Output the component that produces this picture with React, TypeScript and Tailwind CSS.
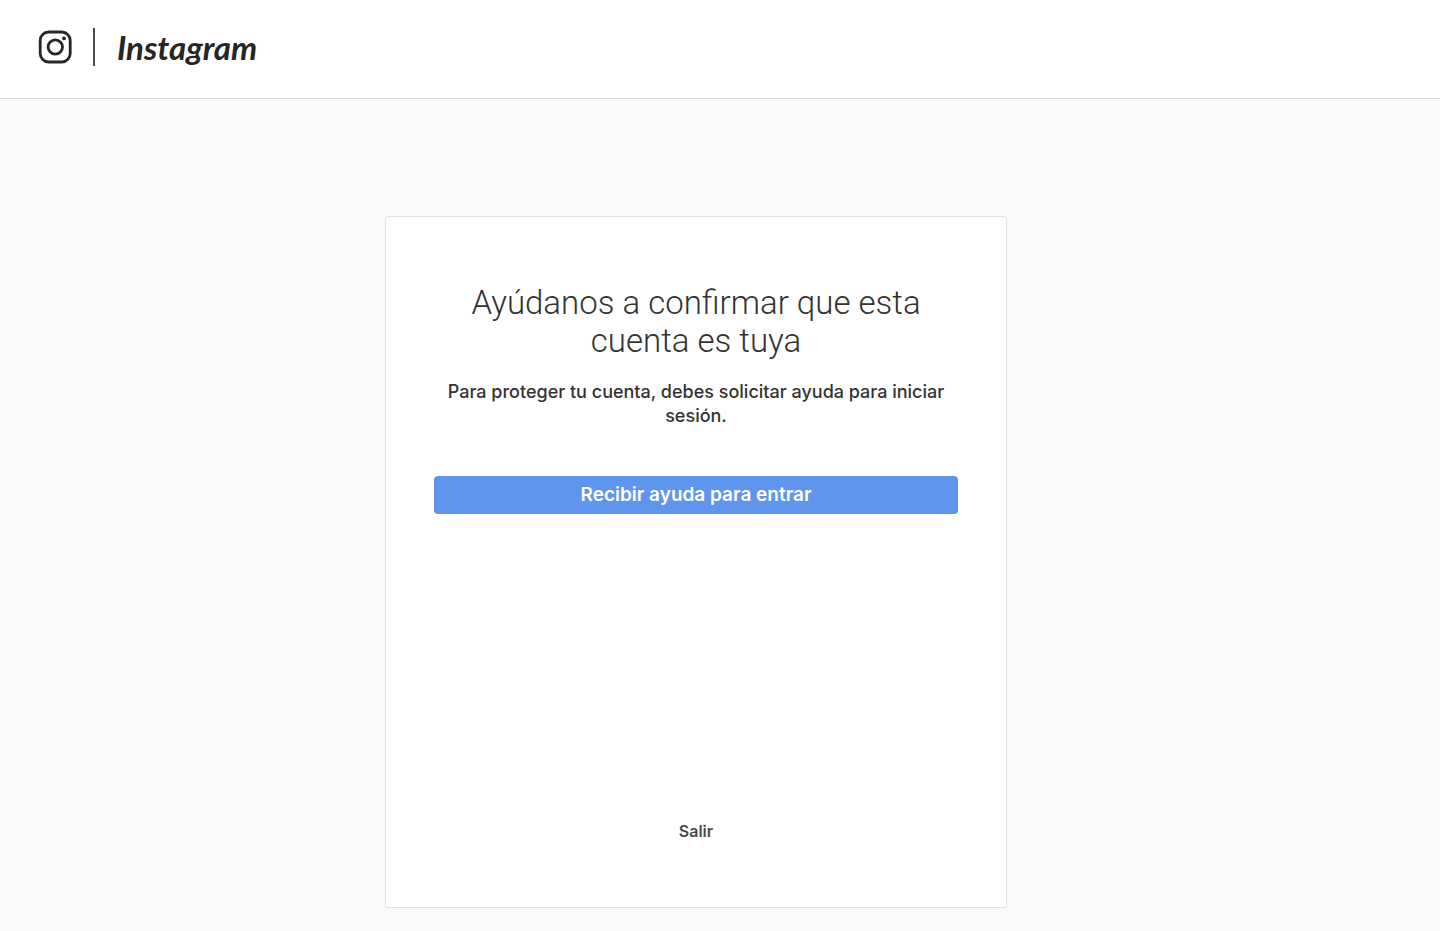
import React from 'react';

function CameraGlyph() {
  return <svg viewBox="0 0 34 34" className="w-[34px] h-[34px]" fill="none" aria-hidden="true">
      <rect x="2.2" y="2" width="30" height="30" rx="8.5" stroke="#262626" strokeWidth="2.8" />
      <circle cx="17.3" cy="17" r="7.2" stroke="#262626" strokeWidth="2.8" />
      <circle cx="26" cy="8.4" r="1.9" fill="#262626" />
    </svg>;
}

function Header() {
  return <header className="bg-white border-b border-[#dedede]">
      <a href="#" className="inline-flex items-center align-top h-[98px] pb-1 px-[38px] text-[#262626]">
        <CameraGlyph />
        <span className="w-[2px] h-[38px] ml-[21px] mr-[22px] bg-[#4a4a4a]" />
        <span className="font-['Lato',sans-serif] text-[33px] leading-[38px] font-bold italic">
          Instagram
        </span>
      </a>
    </header>;
}

function HelpCard() {
  return <main className="flex justify-center pt-[117px] pb-6 pr-12">
      <section className="flex flex-col w-full max-w-[622px] min-h-[692px] px-12 py-16 text-center bg-white border border-[#e2e2e2] rounded-[3px]">
        <h1 className="pt-[3px] px-6 font-['Roboto',sans-serif] text-[33px] leading-[38px] font-light text-[#333]">
          Ayúdanos a confirmar que esta cuenta es tuya
        </h1>
        <p className="mt-5 text-[18px] leading-[24px] font-medium text-[#333]">
          Para proteger tu cuenta, debes solicitar ayuda para iniciar sesión.
        </p>
        <button type="button" className="h-[38px] mt-12 text-[19px] leading-[24px] font-semibold text-white bg-[#5f95ed] rounded-[4px]">
          Recibir ayuda para entrar
        </button>
        <div className="mt-auto">
          <button type="button" className="text-[16px] leading-[24px] font-semibold text-[#4a4a4a]">
            Salir
          </button>
        </div>
      </section>
    </main>;
}

export default function App() {
  return <div className="min-h-screen bg-[#fafafa] font-['Inter',sans-serif]">
      <Header />
      <HelpCard />
    </div>;
}
